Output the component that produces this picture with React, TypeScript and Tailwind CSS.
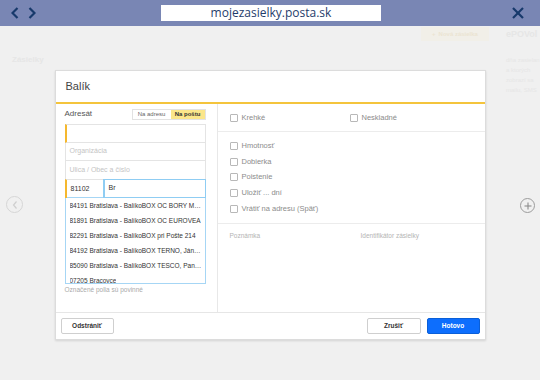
const items = [
  "84191 Bratislava - BalíkoBOX OC BORY MALL",
  "81891 Bratislava - BalíkoBOX OC EUROVEA",
  "82291 Bratislava - BalíkoBOX pri Pošte 214",
  "84192 Bratislava - BalíkoBOX TERNO, Jána Stanislava",
  "85090 Bratislava - BalíkoBOX TESCO, Panónska cesta",
  "07205 Bracovce",
];

const extras = ["Hmotnosť", "Dobierka", "Poistenie", "Uložiť ... dní", "Vrátiť na adresu (Späť)"];

function Checkbox({ label }: { label: string }) {
  return (
    <label className="flex items-center gap-[4px]">
      <span className="w-[8px] h-[8px] border border-[#b8b8b8] rounded-[1px] bg-white" />
      <span className="text-[7.5px] leading-[8px] text-[#8c8c8c]">{label}</span>
    </label>
  );
}

export default function App() {
  return (
    <div className="w-[540px] h-[380px] overflow-hidden bg-[#f0f0f0] font-['Liberation_Sans',sans-serif]">
      {/* browser bar */}
      <div className="h-[26px] bg-[#7986b4] flex items-center px-[11px]">
        <div className="flex items-center gap-[9px] w-[140px]">
          <svg width="8" height="12" viewBox="0 0 8 12" fill="none" stroke="#17396b" strokeWidth="2.2">
            <polyline points="6.5,1 1.5,6 6.5,11" />
          </svg>
          <svg width="8" height="12" viewBox="0 0 8 12" fill="none" stroke="#17396b" strokeWidth="2.2">
            <polyline points="1.5,1 6.5,6 1.5,11" />
          </svg>
        </div>
        <div className="w-[220px] h-[16px] ml-[10px] bg-white flex items-center justify-center font-['Open_Sans',sans-serif] text-[12px] text-[#1f3d6b]">
          mojezasielky.posta.sk
        </div>
        <div className="flex-1 flex justify-end pr-[5px]">
          <svg width="12" height="12" viewBox="0 0 12 12" fill="none" stroke="#17396b" strokeWidth="2.2">
            <line x1="1" y1="1" x2="11" y2="11" />
            <line x1="11" y1="1" x2="1" y2="11" />
          </svg>
        </div>
      </div>

      {/* page behind the dialog */}
      <div className="relative h-[354px]">
        <div className="flex h-full">
          <div className="flex-1 flex flex-col">
            <div className="flex justify-end pr-[17px] pt-[1px]">
              <div className="w-[68px] h-[14px] bg-[#f1efe8] flex items-center justify-center gap-[3px] text-[6px] text-[#ebe4d2] font-bold">
                <span>+</span>
                <span>Nová zásielka</span>
              </div>
            </div>
            <div className="pl-[12px] pt-[13px] text-[8px] text-[#e6e6e6] font-bold">Zásielky</div>
          </div>
          <div className="w-[34px] pt-[2px] flex flex-col gap-[2px] text-[#e6e6e6]">
            <div className="text-[9px] font-bold whitespace-nowrap">ePOVol</div>
            <div className="mt-[12px] text-[6px] leading-[8px] whitespace-nowrap">dňa zasielan</div>
            <div className="text-[6px] leading-[8px] whitespace-nowrap">a ktorých</div>
            <div className="text-[6px] leading-[8px] whitespace-nowrap">zobrazí sa</div>
            <div className="text-[6px] leading-[8px] whitespace-nowrap">mailu, SMS</div>
          </div>
        </div>

        {/* side controls */}
        <div className="absolute left-[6px] top-[170px] w-[17px] h-[17px] rounded-full border border-[#d6d6d6] flex items-center justify-center">
          <svg width="6" height="8" viewBox="0 0 6 8" fill="none" stroke="#cfcfcf" strokeWidth="1.2">
            <polyline points="4.5,0.5 1.5,4 4.5,7.5" />
          </svg>
        </div>
        <div className="absolute left-[520px] top-[172px] w-[15px] h-[15px] rounded-full border border-[#9c9c9c] flex items-center justify-center">
          <svg width="8" height="8" viewBox="0 0 8 8" fill="none" stroke="#8c8c8c" strokeWidth="1.1">
            <line x1="4" y1="0.5" x2="4" y2="7.5" />
            <line x1="0.5" y1="4" x2="7.5" y2="4" />
          </svg>
        </div>

        {/* dialog */}
        <div className="absolute inset-0 flex justify-center pt-[44px]">
          <div className="w-[431px] h-[270px] bg-white border border-[#dcdcdc] shadow-[0_1px_2px_rgba(0,0,0,0.12)] flex flex-col">
            <div className="h-[33px] border-b-2 border-[#f4c43c] flex items-center pl-[10px] text-[11px] text-[#444]">
              Balík
            </div>

            <div className="flex h-[208px]">
              {/* left column */}
              <div className="w-[162px] border-r border-[#e8e8e8] pl-[9px] pr-[11px] pt-[4px]">
                <div className="h-[12px] flex items-center justify-between">
                  <span className="text-[8px] text-[#555]">Adresát</span>
                  <div className="flex h-[11px] border border-[#e2e2e2] text-[6px]">
                    <span className="w-[38px] flex items-center justify-center text-[#666]">Na adresu</span>
                    <span className="w-[34px] flex items-center justify-center bg-[#fbe68a] text-[#333] font-bold">Na poštu</span>
                  </div>
                </div>

                <div className="mt-[4px] h-[19px] border border-[#e4e4e4] border-l-2 border-l-[#f5b82e]" />
                <div className="h-[18px] border-x border-b border-[#e4e4e4] flex items-center pl-[4px] text-[7px] text-[#c4c4c4]">
                  Organizácia
                </div>
                <div className="h-[18px] border-x border-[#e4e4e4] flex items-center pl-[4px] text-[7px] text-[#c4c4c4]">
                  Ulica / Obec a číslo
                </div>
                <div className="h-[19px] flex">
                  <div className="w-[38px] border-t border-[#e4e4e4] border-l-2 border-l-[#f5b82e] flex items-center pl-[4px] text-[7px] text-[#333]">
                    81102
                  </div>
                  <div className="flex-1 border border-[#8fcdf3] border-l-2 flex items-center pl-[4px] text-[7px] text-[#333]">
                    Br
                  </div>
                </div>
                <div className="-mt-px h-[87px] border border-[#a6d6f5] overflow-hidden">
                  {items.map((item) => (
                    <div key={item} className="h-[15px] flex items-center pl-[4px] pr-[3px] text-[6.5px] text-[#333]">
                      <span className="truncate">{item}</span>
                    </div>
                  ))}
                </div>
                <div className="mt-[2px] text-[6.5px] leading-[8px] text-[#aaa]">Označené polia sú povinné</div>
              </div>

              {/* right column */}
              <div className="flex-1 flex flex-col">
                <div className="h-[28px] border-b border-[#ececec] flex items-center pl-[12px]">
                  <div className="w-[120px]">
                    <Checkbox label="Krehké" />
                  </div>
                  <Checkbox label="Neskladné" />
                </div>
                <div className="pt-[6px] pb-[6px] pl-[12px] border-b border-[#ececec]">
                  {extras.map((x) => (
                    <div key={x} className="h-[15.75px] flex items-center">
                      <Checkbox label={x} />
                    </div>
                  ))}
                </div>
                <div className="flex pl-[12px] pt-[8px] text-[6.5px] leading-[8px] text-[#b4b4b4]">
                  <span className="w-[131px]">Poznámka</span>
                  <span>Identifikátor zásielky</span>
                </div>
              </div>
            </div>

            {/* footer */}
            <div className="flex-1 border-t border-[#e6e6e6] flex items-center justify-between px-[5px]">
              <button className="w-[53px] h-[16px] border border-[#cfcfcf] rounded-[2px] bg-white text-[6.5px] font-bold text-[#333]">
                Odstrániť
              </button>
              <div className="flex gap-[6px]">
                <button className="w-[54px] h-[16px] border border-[#cfcfcf] rounded-[2px] bg-white text-[6.5px] font-bold text-[#333]">
                  Zrušiť
                </button>
                <button className="w-[53px] h-[16px] border border-[#0a5fd8] rounded-[2px] bg-[#0d6efd] text-[6.5px] font-bold text-white">
                  Hotovo
                </button>
              </div>
            </div>
          </div>
        </div>
      </div>
    </div>
  );
}
